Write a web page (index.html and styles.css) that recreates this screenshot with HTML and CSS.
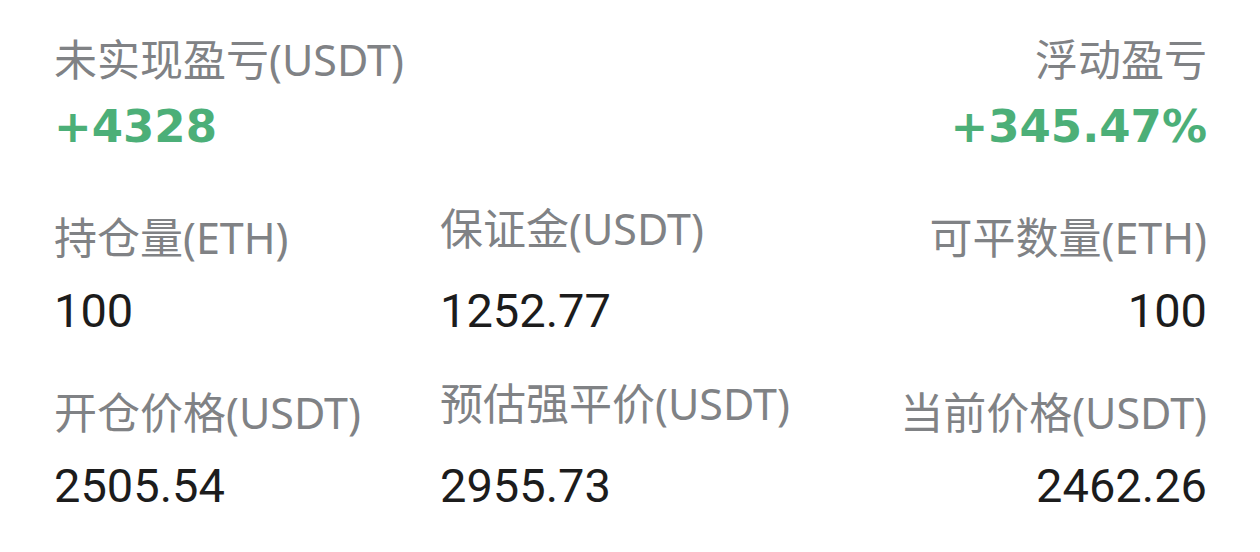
FILE: index.html
```html
<!DOCTYPE html>
<html lang="zh-CN">
<head>
    <meta charset="UTF-8">
    <meta name="viewport" content="width=device-width, initial-scale=1.0">
    <title>持仓详情</title>
    <link rel="stylesheet" href="styles.css">
</head>
<body>
    <div class="position">
        <div class="pnl">
            <div class="item">
                <div class="label">未实现盈亏(USDT)</div>
                <div class="profit">+4328</div>
            </div>
            <div class="item right">
                <div class="label">浮动盈亏</div>
                <div class="profit">+345.47%</div>
            </div>
        </div>

        <div class="grid">
            <div class="item">
                <div class="label">持仓量(ETH)</div>
                <div class="value">100</div>
            </div>
            <div class="item mid">
                <div class="label">保证金(USDT)</div>
                <div class="value">1252.77</div>
            </div>
            <div class="item right">
                <div class="label">可平数量(ETH)</div>
                <div class="value">100</div>
            </div>

            <div class="item">
                <div class="label">开仓价格(USDT)</div>
                <div class="value">2505.54</div>
            </div>
            <div class="item mid">
                <div class="label">预估强平价(USDT)</div>
                <div class="value">2955.73</div>
            </div>
            <div class="item right">
                <div class="label">当前价格(USDT)</div>
                <div class="value">2462.26</div>
            </div>
        </div>
    </div>
</body>
</html>
```

FILE: styles.css
```css
/* Базові стилі */
body {
    margin: 0;
    padding: 0;
    background: #ffffff;
    font-family: 'Noto Sans', 'Noto Sans CJK SC', sans-serif;
    color: #1c1c1c;
}

.position {
    padding: 30px 53px 0 54px;
}

.pnl {
    display: flex;
    justify-content: space-between;
}

.grid {
    display: grid;
    grid-template-columns: 386px 1fr 1fr;
    row-gap: 37px;
    margin-top: 46px;
}

.item {
    display: flex;
    flex-direction: column;
}

.item.right {
    text-align: right;
}

.label {
    font-size: 43px;
    line-height: 60px;
    color: #808285;
}

.mid .label {
    margin-top: -9px;
    margin-bottom: 9px;
}

.profit {
    font-family: 'DejaVu Sans', sans-serif;
    font-size: 45px;
    font-weight: 700;
    line-height: 70px;
    margin-top: 2px;
    color: #4caf78;
}

.value {
    font-family: 'Roboto', sans-serif;
    font-size: 47px;
    line-height: 70px;
    margin-top: 8px;
    color: #1c1c1c;
}
```
